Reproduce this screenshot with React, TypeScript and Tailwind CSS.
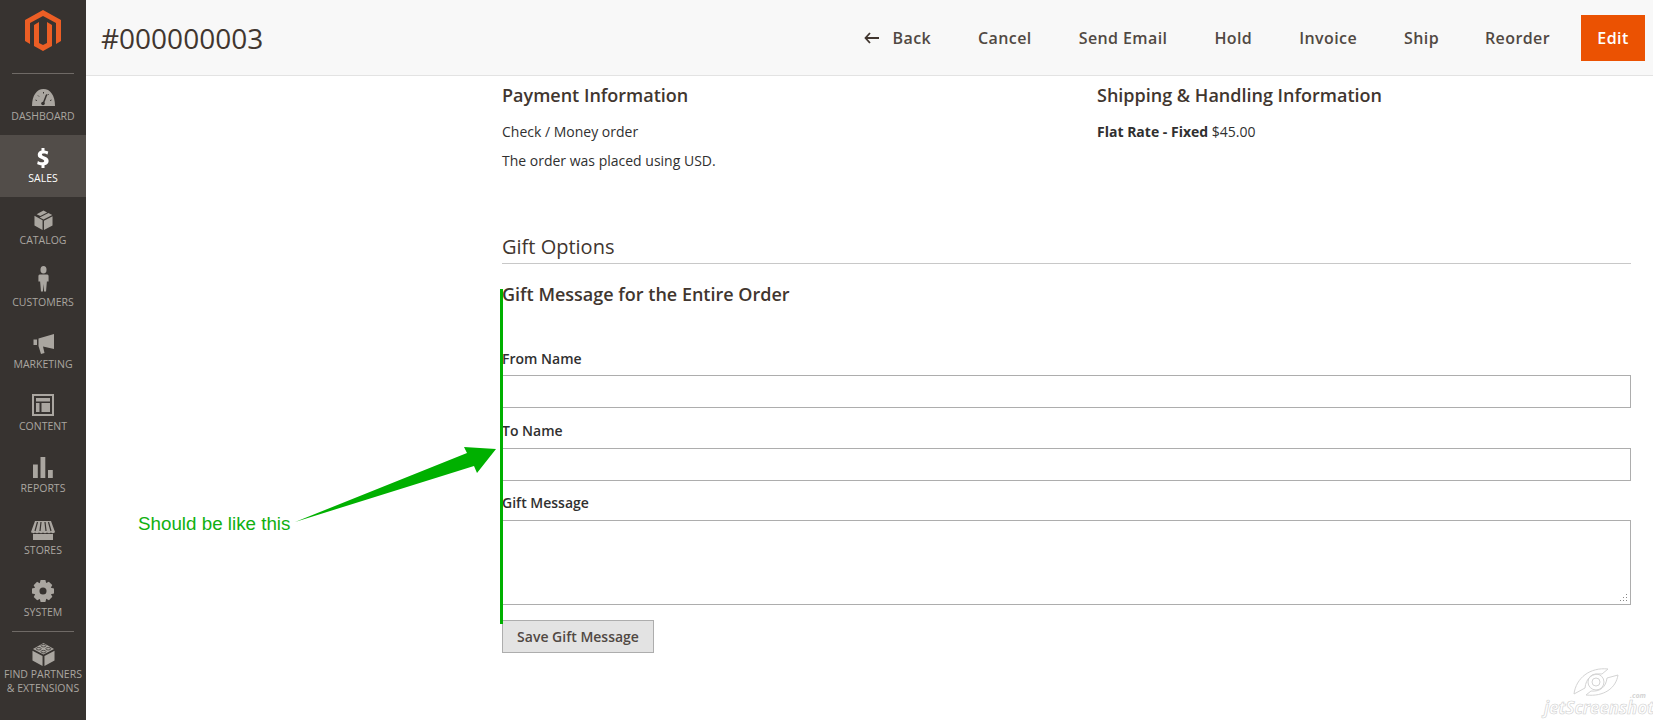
import React from "react";

const C = "#aaa6a0";
const D = "#373330";
const icons: Record<string, React.ReactNode> = {
  dashboard: (
    <svg width="23" height="17" viewBox="0 0 23 17">
      <path fill={C} d="M0 17 C0 6 5 0 11.500 0 C18 0 23 6 23 17 Z" />
      <path stroke={D} strokeWidth="1.500" strokeLinecap="round" fill="none" d="M11 15 L14.500 6" />
      <circle cx="11" cy="14.500" r="1.800" fill={D} />
      <path stroke={D} strokeWidth="1" fill="none" d="M3.500 11l1.400.6M6 6.500l1 1M11.500 3v1.500M16.500 5l-.7 1.100M19.500 11l-1.400.6" />
    </svg>
  ),
  sales: (
    <svg width="12" height="20" viewBox="0 0 16 25" preserveAspectRatio="none">
      <path fill="#fff" d="M6 0h4v3c2 .2 3.800.7 5 1.400l-1 3.700c-1.300-.7-3-1.300-5-1.300-1.700 0-2.500.6-2.500 1.400 0 1 1 1.500 3.500 2.400 3.600 1.200 5.500 2.800 5.500 5.700 0 2.800-2 4.900-5.500 5.400V25H6v-3.400c-2.300-.1-4.500-.8-5.800-1.600l1-3.800c1.400.8 3.400 1.600 5.500 1.600 1.800 0 2.900-.7 2.900-1.700 0-1.100-1-1.700-3.200-2.500C3.400 13.100 1 11.600 1 8.500c0-2.700 2-4.800 5-5.300z" />
    </svg>
  ),
  catalog: (
    <svg width="19" height="20" viewBox="0 0 20 21">
      <path fill={C} d="M10 0.500 L13.800 2.500 L6.600 6.400 L2.800 4.400Z M15.200 3.200 L19.200 5.200 L10 10 L6 7.900 Z" />
      <path fill={C} d="M0.500 6 L9 10.800 V21 L0.500 16.200Z M19.500 6.500 V16.200 L10.500 21 V11.200Z" />
    </svg>
  ),
  customers: (
    <svg width="11" height="26" viewBox="0 0 13 26" preserveAspectRatio="none">
      <ellipse cx="6.500" cy="3.800" rx="3.600" ry="3.800" fill={C} />
      <path fill={C} d="M2 8.500 H11 Q12.500 8.500 12.500 10 L12.500 15.500 L10.500 15.500 L9.500 25.500 L7.200 25.500 L6.500 18 L5.800 25.500 L3.500 25.500 L2.500 15.500 L0.500 15.500 L0.500 10 Q0.500 8.500 2 8.500Z" />
    </svg>
  ),
  marketing: (
    <svg width="21" height="20" viewBox="0 0 21 20">
      <path fill={C} d="M21 0 V15 L10 12.500 L11.500 19 L8 20 L5.500 12 V4.500 Z" />
      <rect x="0.500" y="5.500" width="3.500" height="5.500" fill={C} />
    </svg>
  ),
  content: (
    <svg width="22" height="22" viewBox="0 0 22 22">
      <path fill={C} fillRule="evenodd" d="M0 0H22V22H0Z M2 2V20H20V2Z" />
      <rect x="4" y="4" width="14" height="3.500" fill={C} />
      <rect x="4" y="9" width="3.500" height="9" fill={C} />
      <rect x="9.500" y="9" width="8.500" height="9" fill={C} />
    </svg>
  ),
  reports: (
    <svg width="20" height="21" viewBox="0 0 20 21">
      <rect x="0" y="7.500" width="4.800" height="13.500" fill={C} />
      <rect x="7.500" y="0" width="4.800" height="21" fill={C} />
      <rect x="15" y="13" width="4.800" height="8" fill={C} />
    </svg>
  ),
  stores: (
    <svg width="24" height="19" viewBox="0 0 24 19">
      <path fill={C} d="M4 0 H20 L24 11 C23 12.500 21 12.500 20 11.500 C19 12.500 17 12.500 16 11.500 C15 12.500 13 12.500 12 11.500 C11 12.500 9 12.500 8 11.500 C7 12.500 5 12.500 4 11.500 C3 12.500 1 12.500 0 11 Z" />
      <path stroke={D} strokeWidth="1.200" fill="none" d="M6.500 1 L4 10 M10 1 L9 10 M14 1 L15 10 M17.500 1 L20 10" />
      <rect x="2" y="13" width="20" height="6" fill={C} />
    </svg>
  ),
  system: (
    <svg width="22" height="22" viewBox="0 0 23 23">
      <path fill={C} fillRule="evenodd" d="M9 0 H14 L14.800 3.200 L17.600 1.700 L21.200 5.300 L19.700 8.100 L23 9 V14 L19.800 14.800 L21.300 17.600 L17.700 21.200 L14.900 19.700 L14 23 H9 L8.200 19.800 L5.400 21.300 L1.800 17.700 L3.300 14.900 L0 14 V9 L3.200 8.200 L1.700 5.400 L5.300 1.800 L8.100 3.300 Z M11.500 7.800 A3.700 3.700 0 1 0 11.501 15.200 A3.700 3.700 0 1 0 11.500 7.800Z" />
    </svg>
  ),
  partners: (
    <svg width="23" height="23" viewBox="0 0 23 24">
      <path fill={C} d="M0 8 L10.500 13.500 V24 L0 18.300Z M23 8 V18.300 L12.500 24 V13.500Z" />
      <path fill={C} d="M11.500 0 L22.500 6.300 L11.500 12 L0.500 6.300 Z" />
      <ellipse cx="11.500" cy="2.800" rx="2.600" ry="1.300" fill={C} stroke={D} strokeWidth=".8" />
      <ellipse cx="6.500" cy="6" rx="2.600" ry="1.300" fill={C} stroke={D} strokeWidth=".8" />
      <ellipse cx="16.500" cy="6" rx="2.600" ry="1.300" fill={C} stroke={D} strokeWidth=".8" />
      <ellipse cx="11.500" cy="9" rx="2.600" ry="1.300" fill={C} stroke={D} strokeWidth=".8" />
    </svg>
  ),
};

const nav = [
  ["dashboard", "DASHBOARD"],
  ["sales", "SALES"],
  ["catalog", "CATALOG"],
  ["customers", "CUSTOMERS"],
  ["marketing", "MARKETING"],
  ["content", "CONTENT"],
  ["reports", "REPORTS"],
  ["stores", "STORES"],
  ["system", "SYSTEM"],
];

export default function App() {
  const label = "text-[14px] font-semibold leading-[20px] text-[#303030]";
  return (
    <div className="relative flex h-[720px] w-full overflow-hidden bg-white font-['Open_Sans',sans-serif] text-[#41362f]">
      <aside className="flex h-full w-[86px] shrink-0 flex-col bg-[#373330]">
        <div className="flex h-[73px] items-start justify-center pt-[10px]">
          <svg width="36" height="41" viewBox="0 0 36 41">
            <path fill="#eb5e25" d="M18 0 L36 10 V31 L31 34 V13 L18 6 L5 13 V34 L0 31 V10Z M9 15 L14 12 V33 L18 35 L22 33 V12 L27 15 V36 L18 41 L9 36 Z" />
          </svg>
        </div>
        <div className="mx-[12px] -mb-px h-px bg-[#6f6a66]" />
        {nav.map(([k, text]) => (
          <div
            key={k}
            className={`flex h-[62px] shrink-0 flex-col items-center justify-end pb-[11px] ${k === "sales" ? "bg-[#524d49] text-white" : "text-[#aaa6a0]"}`}
          >
            <div className="flex items-end justify-center">{icons[k]}</div>
            <div className="mt-[2px] text-[10.500px] leading-[16px]">{text}</div>
          </div>
        ))}
        <div className="mx-[12px] h-px bg-[#6f6a66]" />
        <div className="flex flex-col items-center pt-[11px] text-[#aaa6a0]">
          {icons.partners}
          <div className="mt-[1px] whitespace-nowrap text-center text-[10.500px] leading-[14px]">
            FIND PARTNERS
            <br />& EXTENSIONS
          </div>
        </div>
      </aside>

      <main className="min-w-0 flex-1">
        <header className="flex h-[76px] items-center border-b border-[#e3e3e3] bg-[#f8f8f8] pl-[15px] pr-[8px]">
          <h1 className="flex-1 text-[28px] font-normal leading-none text-[#41362f]">#000000003</h1>
          <div className="flex items-center text-[16px] font-semibold tracking-[0.4px] text-[#514943]">
            <span className="flex items-center pr-[47px]">
              <svg width="15" height="12" viewBox="0 0 15 12" className="mr-[14px]">
                <path d="M6 1 L1.500 6 L6 11 M1.500 6 H15" fill="none" stroke="#41362f" strokeWidth="1.800" />
              </svg>
              Back
            </span>
            <span className="pr-[47px]">Cancel</span>
            <span className="pr-[47px]">Send Email</span>
            <span className="pr-[47px]">Hold</span>
            <span className="pr-[47px]">Invoice</span>
            <span className="pr-[46px]">Ship</span>
            <span className="pr-[31px]">Reorder</span>
            <span className="flex h-[46px] w-[64px] items-center justify-center bg-[#eb5202] text-white">Edit</span>
          </div>
        </header>

        <div className="pl-[416px] pr-[22px]">
          <div className="flex pt-[7px]">
            <section className="w-[595px]">
              <h2 className="text-[18px] font-semibold leading-[24px] text-[#41362f]">Payment Information</h2>
              <p className="mt-[15px] text-[14px] leading-[20px] text-[#303030]">Check / Money order</p>
              <p className="mt-[9px] text-[14px] leading-[20px] text-[#303030]">The order was placed using USD.</p>
            </section>
            <section>
              <h2 className="text-[18px] font-semibold leading-[24px] text-[#41362f]">Shipping &amp; Handling Information</h2>
              <p className="mt-[15px] text-[14px] leading-[20px] text-[#303030]">
                <b className="font-bold">Flat Rate - Fixed</b> $45.00
              </p>
            </section>
          </div>

          <h2 className="mt-[62px] border-b border-[#c8c8c8] pb-[3px] text-[20px] font-normal leading-[27px] text-[#41362f]">Gift Options</h2>
          <h3 className="mt-[18px] text-[18px] font-semibold leading-[25px] text-[#41362f]">Gift Message for the Entire Order</h3>

          <div className="mt-[29px]">
            <div className={`h-[39px] pt-[13px] ${label}`}>From Name</div>
            <input className="block h-[33px] w-full border border-[#adadad] bg-white" />
            <div className={`h-[40px] pt-[13px] ${label}`}>To Name</div>
            <input className="block h-[33px] w-full border border-[#adadad] bg-white" />
            <div className={`h-[39px] pt-[12px] ${label}`}>Gift Message</div>
            <div className="relative h-[85px] border border-[#adadad]">
              <svg width="9" height="9" viewBox="0 0 9 9" className="absolute bottom-[2px] right-[2px]">
                <path fill="#888" d="M7 1h1v1H7zM7 4h1v1H7zM4 4h1v1H4zM7 7h1v1H7zM4 7h1v1H4zM1 7h1v1H1z" />
              </svg>
            </div>
            <button className="mt-[15px] block h-[33px] w-[152px] border border-[#adadad] bg-[#e3e3e3] text-[14px] font-semibold text-[#514943]">Save Gift Message</button>
          </div>
        </div>
      </main>

      {/* annotation */}
      <div className="absolute left-[500px] top-[289px] h-[335px] w-[3px] bg-[#00b000]" />
      <svg className="absolute left-[290px] top-[440px]" width="210" height="85" viewBox="0 0 210 85">
        <path fill="#00b000" d="M5 82 L177 13 L174 7 L206 9 L187 33 L184 26 Z" />
      </svg>
      <div className="absolute left-[138px] top-[512px] font-['Liberation_Sans',sans-serif] text-[18.800px] leading-[24px] text-[#10b010]">Should be like this</div>

      {/* watermark */}
      <svg className="absolute left-[1572px] top-[668px]" width="48" height="28" viewBox="0 0 48 28" fill="none" stroke="#d4d4d4" strokeWidth="1">
        <circle cx="24" cy="14" r="8" />
        <circle cx="24" cy="14" r="4" />
        <path d="M2 26 C4 10 18 -1 36 1 L30 6 C20 5 14 10 13 20 Z" />
        <path d="M46 7 C44 20 32 29 14 27 L19 23 C28 24 34 19 35 10 Z" />
      </svg>
      <div className="absolute left-[1544px] top-[701px] text-[17px] font-bold italic leading-[14px] text-transparent [-webkit-text-stroke:0.6px_#cfcfcf]">jetScreenshot</div>
      <div className="absolute left-[1630px] top-[692px] text-[7px] font-bold italic leading-[7px] text-[#d4d4d4]">.com</div>
    </div>
  );
}
